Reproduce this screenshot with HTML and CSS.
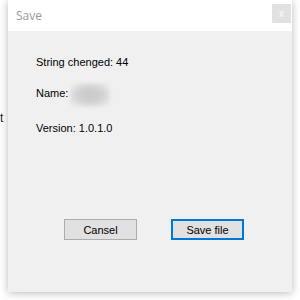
FILE: index.html
```html
<!DOCTYPE html>
<html>
<head>
<meta charset="utf-8">
<link rel="stylesheet" href="styles.css">
</head>
<body>
<div class="behind">t</div>
<div class="dialog">
  <div class="titlebar">
    <span class="title">Save</span>
    <span class="close">x</span>
  </div>
  <div class="content">
    <div class="row row-first">String chenged: 44</div>
    <div class="row row-name">Name: <span class="blur"></span></div>
    <div class="row row-version">Version: 1.0.1.0</div>
    <div class="buttons">
      <button class="btn">Cansel</button>
      <button class="btn btn-default">Save file</button>
    </div>
  </div>
</div>
</body>
</html>
```
FILE: styles.css
```css
html, body {
  margin: 0;
  padding: 0;
  background: #ffffff;
  width: 300px;
  height: 300px;
  overflow: hidden;
}
body {
  position: relative;
  font-family: "Liberation Sans", Arial, sans-serif;
  font-size: 11px;
  color: #000;
}
.behind {
  position: absolute;
  left: 0;
  top: 111px;
  z-index: 2;
  font-size: 12px;
  color: #1a1a2a;
}
.dialog {
  position: relative;
  margin-left: 8px;
  margin-top: 0;
  width: 284px;
  height: 292px;
  background: #f0f0f0;
  box-shadow: 0 1px 8px rgba(0, 0, 0, 0.28);
  display: flex;
  flex-direction: column;
}
.titlebar {
  height: 31px;
  background: #ffffff;
  display: flex;
  align-items: center;
  justify-content: space-between;
  padding-left: 8px;
  padding-right: 1px;
  box-sizing: border-box;
}
.title {
  font-family: "Open Sans", "Noto Sans", sans-serif;
  font-size: 12px;
  color: #9a9a9a;
  margin-top: -1px;
}
.close {
  width: 19px;
  height: 19px;
  background: #e1e1e1;
  color: #f5f5f5;
  font-size: 10px;
  display: flex;
  align-items: center;
  justify-content: center;
  margin-top: -4px;
  font-family: "Liberation Sans", sans-serif;
  font-weight: bold;
}
.content {
  flex: 1;
  padding: 25px 0 0 28px;
  display: flex;
  flex-direction: column;
}
.row {
  height: 13px;
  line-height: 13px;
  display: flex;
  align-items: center;
  color: #000;
}
.row-name {
  margin-top: 18px;
}
.row-version {
  margin-top: 22px;
}
.blur {
  display: inline-block;
  width: 40px;
  height: 24px;
  margin-left: 2px;
  margin-top: 3px;
  border-radius: 4px;
  background: radial-gradient(ellipse at center, #c8c8c8 0%, #d2d2d2 45%, #e8e8e8 80%, #eeeeee 100%);
  filter: blur(1.5px);
}
.buttons {
  display: flex;
  gap: 34px;
  margin-top: 84px;
  padding-left: 28px;
}
.btn {
  width: 73px;
  height: 21px;
  margin: 0;
  padding: 0;
  background: #e1e1e1;
  border: 1px solid #adadad;
  font-family: "Liberation Sans", Arial, sans-serif;
  font-size: 11px;
  color: #000;
  box-sizing: border-box;
}
.btn-default {
  border: 2px solid #0078d7;
}
```
